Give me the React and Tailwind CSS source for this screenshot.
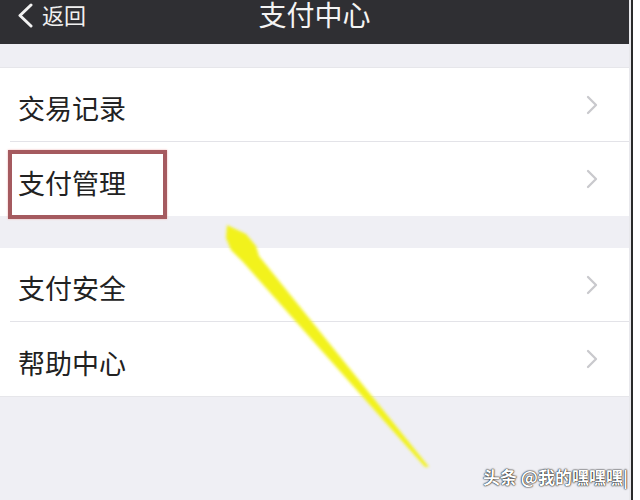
import React from "react";

const font = { fontFamily: '"Noto Sans CJK SC", "Noto Sans", sans-serif' };

function Chevron() {
  return (
    <svg width="14" height="20" viewBox="0 0 14 20" className="shrink-0">
      <polyline points="3,2 11,10 3,18" fill="none" stroke="#c9c9cd" strokeWidth="2.3" strokeLinecap="round" strokeLinejoin="round" />
    </svg>
  );
}

function Row({ label, last }) {
  return (
    <div className="h-[74px] bg-white flex flex-col">
      <div className="flex-1 flex items-center justify-between pl-[18px] pr-[30px]">
        <span className="text-[27px] leading-none text-[#222222] mt-[6px]">{label}</span>
        <Chevron />
      </div>
      {!last && <div className="h-px ml-[10px] bg-[#e3e3e8]" />}
    </div>
  );
}

export default function App() {
  return (
    <div className="w-[640px] h-[500px] relative overflow-hidden bg-white flex" style={font}>
      <div className="w-[629px] h-full flex flex-col bg-[#efeff4]">
        <div className="h-[44px] bg-[#2f2f33] grid grid-cols-[1fr_auto_1fr] items-start">
          <div className="flex items-start pl-[17px] pt-[3px] gap-[8px]">
            <svg width="17" height="25" viewBox="0 0 17 25">
              <polyline points="14,2 3,12.5 14,23" fill="none" stroke="#f2f2f2" strokeWidth="3" strokeLinecap="round" strokeLinejoin="round" />
            </svg>
            <span className="text-[22px] leading-none text-[#f0f0f0]">返回</span>
          </div>
          <span className="text-[28px] leading-none text-[#f4f4f4]">支付中心</span>
          <div />
        </div>
        <div className="h-[24px] border-b border-[#e6e6ea]" />
        <Row label="交易记录" />
        <Row label="支付管理" last />
        <div className="h-[32px]" />
        <Row label="支付安全" />
        <Row label="帮助中心" last />
        <div className="flex-1 border-t border-[#e6e6ea]" />
      </div>
      <div className="w-[2px] h-full bg-[#e8e8ec]" />
      <div className="w-[2px] h-full bg-[#2a2a2a]" />
      <div className="flex-1 h-full bg-white" />

      <div className="absolute left-[8px] top-[150px] w-[159px] h-[69px] border-[4px] border-[#a55a5f] shadow-[0_0_2px_#f0b0b0]" />

      <svg className="absolute left-0 top-0 pointer-events-none" width="640" height="500" viewBox="0 0 640 500">
        <defs>
          <filter id="blur" x="-20%" y="-20%" width="140%" height="140%">
            <feGaussianBlur stdDeviation="1.8" />
          </filter>
        </defs>
        <polygon
          points="227,225 246,234 256,246 259,256 429,467 425,467 243,262 231,250 226,238"
          fill="#f2f21e"
          filter="url(#blur)"
        />
      </svg>

      <div className="absolute right-[12px] top-[468px] text-[17px] font-bold leading-none text-white [text-shadow:0_0_2px_#000,0_0_1px_#000]">
        头条 @我的嘿嘿嘿|
      </div>
    </div>
  );
}
